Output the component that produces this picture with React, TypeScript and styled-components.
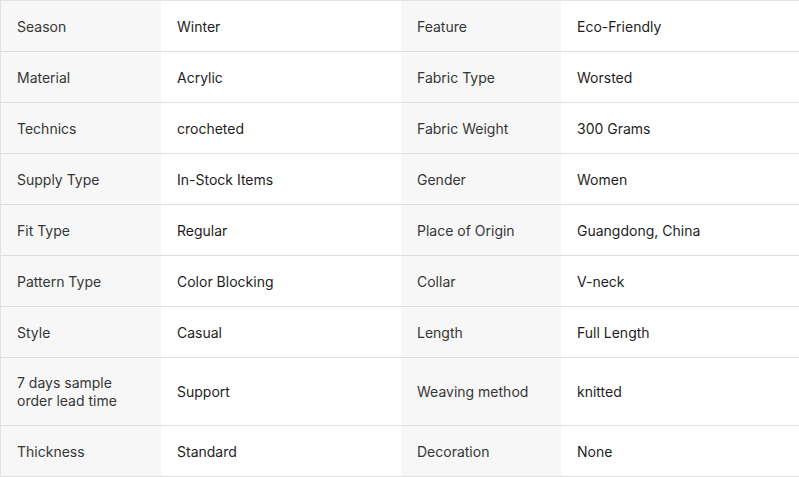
import React from "react";
import styled, { createGlobalStyle } from "styled-components";

const Global = createGlobalStyle`
  html, body { margin: 0; padding: 0; background: #fff; }
  body { font-family: Inter, "Noto Sans", Arial, sans-serif; }
`;

const Table = styled.div`
  width: 799px;
  border-top: 1px solid #e2e2e2;
  border-left: 1px solid #e2e2e2;
  box-sizing: border-box;
`;

const Row = styled.div`
  display: grid;
  grid-template-columns: 160px 240px 160px 1fr;
  border-bottom: 1px solid #dedede;
`;

const Cell = styled.div<{ $label?: boolean }>`
  box-sizing: border-box;
  min-height: 50px;
  padding: 16px 16px 15px 16px;
  display: flex;
  align-items: center;
  font-size: 14px;
  line-height: 18px;
  background: ${(p) => (p.$label ? "#f7f7f7" : "#fff")};
  color: ${(p) => (p.$label ? "#363636" : "#1e1e1e")};
`;

const data: [string, string, string, string][] = [
  ["Season", "Winter", "Feature", "Eco-Friendly"],
  ["Material", "Acrylic", "Fabric Type", "Worsted"],
  ["Technics", "crocheted", "Fabric Weight", "300 Grams"],
  ["Supply Type", "In-Stock Items", "Gender", "Women"],
  ["Fit Type", "Regular", "Place of Origin", "Guangdong, China"],
  ["Pattern Type", "Color Blocking", "Collar", "V-neck"],
  ["Style", "Casual", "Length", "Full Length"],
  ["7 days sample order lead time", "Support", "Weaving method", "knitted"],
  ["Thickness", "Standard", "Decoration", "None"],
];

export default function App() {
  return (
    <>
      <Global />
      <Table>
        {data.map((r, i) => (
          <Row key={i}>
            <Cell $label>{r[0]}</Cell>
            <Cell>{r[1]}</Cell>
            <Cell $label>{r[2]}</Cell>
            <Cell>{r[3]}</Cell>
          </Row>
        ))}
      </Table>
    </>
  );
}
